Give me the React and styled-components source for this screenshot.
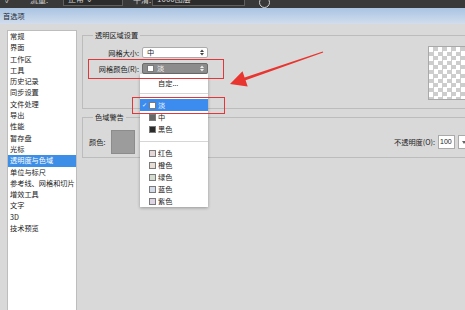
import React from "react";
import styled, { createGlobalStyle } from "styled-components";

const Global = createGlobalStyle`
  html, body { margin: 0; padding: 0; background: #d9d9d9; }
  body { font-family: "Noto Sans CJK SC", "Noto Sans", sans-serif; }
`;

const Window = styled.div`
  position: relative;
  width: 465px;
  height: 310px;
  overflow: hidden;
  background: #d9d9d9;
  display: flex;
  flex-direction: column;
  font-family: "Noto Sans CJK SC", "Noto Sans", sans-serif;
  font-size: 7.2px;
  color: #222;
`;

const TopBar = styled.div`
  height: 8px;
  flex-shrink: 0;
  background: #393939;
  display: flex;
  align-items: flex-end;
  overflow: hidden;
  color: #cfcfcf;
`;

const TBItem = styled.div`
  flex-shrink: 0;
  height: 16px;
  margin-left: ${(p) => p.$ml}px;
  width: ${(p) => p.$w}px;
  margin-bottom: ${(p) => p.$mb || 0}px;
  font-size: 8px;
  line-height: 16px;
  white-space: nowrap;
  overflow: hidden;
`;

const TBInput = styled(TBItem)`
  box-sizing: border-box;
  height: 14px;
  background: #2b2b2b;
  border: 1px solid #5f5f5f;
  padding-left: 4px;
  line-height: 12px;
`;

const TBCircle = styled.div`
  flex-shrink: 0;
  margin-left: ${(p) => p.$ml}px;
  width: 9px;
  height: 9px;
  border: 1.5px solid #d0d0d0;
  border-radius: 50%;
`;

const TitleBar = styled.div`
  height: 16px;
  flex-shrink: 0;
  background: linear-gradient(#a9c4e2, #d2dded);
  padding-left: 3px;
  line-height: 17px;
  font-size: 7.2px;
  color: #1e2a38;
`;

const Content = styled.div`
  flex: 1;
  display: flex;
  align-items: flex-start;
  gap: 5px;
  padding: 6px 0 0 7px;
`;

const Sidebar = styled.div`
  flex-shrink: 0;
  width: 70px;
  height: 290px;
  box-sizing: border-box;
  background: #fff;
  border: 1px solid #bdbdbd;
`;

const NavItem = styled.div`
  height: 11.3px;
  line-height: 11.3px;
  padding-left: 2px;
  white-space: nowrap;
  overflow: hidden;
  background: ${(p) => (p.$active ? "#3d8ee6" : "transparent")};
  color: ${(p) => (p.$active ? "#fff" : "#222")};
`;

const Main = styled.div`
  flex-shrink: 0;
  display: flex;
  flex-direction: column;
  gap: 3px;
`;

const Group = styled.fieldset`
  margin: 0;
  padding: 0;
  min-inline-size: 0;
  width: 405px;
  height: ${(p) => p.$h}px;
  box-sizing: border-box;
  border: 1px solid #bcbcbc;
`;

const GroupTitle = styled.legend`
  margin-left: 10px;
  padding: 0 2px;
  font-size: 7.2px;
  line-height: 10px;
  color: #222;
`;

const GroupRow = styled.div`
  display: flex;
  align-items: ${(p) => p.$align || "flex-start"};
  margin-top: ${(p) => p.$mt || 0}px;
  padding-left: ${(p) => p.$pl || 0}px;
`;

const Form = styled.div`
  display: grid;
  grid-template-columns: 56px 66px;
  column-gap: 3px;
  row-gap: 5px;
  margin-top: 7px;
  align-items: center;
`;

const Label = styled.div`
  text-align: right;
  white-space: nowrap;
`;

const Select = styled.div`
  height: 11px;
  box-sizing: border-box;
  display: flex;
  align-items: center;
  gap: 3px;
  padding: 0 3px 0 4px;
  border-radius: 2px;
  border: 1px solid ${(p) => (p.$pressed ? "#6d6d6d" : "#ababab")};
  background: ${(p) => (p.$pressed ? "#8c8c8c" : "#fff")};
  color: ${(p) => (p.$pressed ? "#fff" : "#222")};
  line-height: 11px;
`;

const SelectText = styled.span`
  flex: 1;
`;

const Swatch = styled.span`
  display: inline-block;
  flex-shrink: 0;
  width: 7px;
  height: 7px;
  box-sizing: border-box;
  border: 1px solid ${(p) => (p.$none ? "transparent" : "#7a7a7a")};
  background: ${(p) => p.$c || "transparent"};
`;

const Preview = styled.div`
  margin: 6px 8px 0 auto;
  width: 50px;
  height: 54px;
  box-sizing: border-box;
  border: 1px solid #a9a9a9;
  background-color: #fff;
  background-image: conic-gradient(#cdcdcd 90deg, #fff 90deg 180deg, #cdcdcd 180deg 270deg, #fff 270deg);
  background-size: 9px 9px;
`;

const ColorLabel = styled.div`
  white-space: nowrap;
`;

const WarnSwatch = styled.div`
  margin-left: 6px;
  width: 24px;
  height: 24px;
  box-sizing: border-box;
  background: #9c9c9c;
  border: 1px solid #8c8c8c;
`;

const Opacity = styled.div`
  margin-left: auto;
  margin-right: 17px;
  display: flex;
  align-items: center;
  gap: 3px;
`;

const NumInput = styled.div`
  width: 17px;
  height: 14px;
  box-sizing: border-box;
  background: #fff;
  border: 1px solid #aaa;
  font-family: "Liberation Sans", sans-serif;
  font-size: 7px;
  line-height: 12px;
  padding-left: 1px;
`;

const ArrowBox = styled.div`
  width: 11px;
  height: 14px;
  box-sizing: border-box;
  background: #fff;
  border: 1px solid #aaa;
  display: flex;
  align-items: center;
  justify-content: center;
`;

const Menu = styled.div`
  position: absolute;
  left: 140px;
  top: 74px;
  width: 68px;
  padding-top: 3px;
  background: #fff;
  box-shadow: 0 1px 3px rgba(0, 0, 0, 0.3);
`;

const MenuItem = styled.div`
  height: 12px;
  display: flex;
  align-items: center;
  padding-left: 2px;
  background: ${(p) => (p.$active ? "#3c8cf0" : "transparent")};
  color: ${(p) => (p.$active ? "#fff" : "#222")};
`;

const Check = styled.span`
  width: 7px;
  flex-shrink: 0;
  font-family: "DejaVu Sans", sans-serif;
  font-size: 6px;
  line-height: 12px;
`;

const ItemText = styled.span`
  margin-left: 2px;
  white-space: nowrap;
`;

const Sep = styled.div`
  height: 1px;
  background: #d6d6d6;
  margin: ${(p) => p.$m};
`;

const Highlight = styled.div`
  position: absolute;
  left: ${(p) => p.$x}px;
  top: ${(p) => p.$y}px;
  width: ${(p) => p.$w}px;
  height: ${(p) => p.$h}px;
  box-sizing: border-box;
  border: 1.5px solid #e0383a;
`;

const ArrowSvg = styled.svg`
  position: absolute;
  left: 225px;
  top: 48px;
`;

const UpDown = ({ color }) => (
  <svg width="4" height="7" viewBox="0 0 4 7">
    <path d="M0 3 L2 0.5 L4 3 Z M0 4 L2 6.5 L4 4 Z" fill={color} />
  </svg>
);

const nav = [
  "常规", "界面", "工作区", "工具", "历史记录", "同步设置", "文件处理", "导出",
  "性能", "暂存盘", "光标", "透明度与色域", "单位与标尺", "参考线、网格和切片",
  "增效工具", "文字", "3D", "技术预览",
];

const colors = [
  ["红色", "#e6d6d6"],
  ["橙色", "#e8ddd5"],
  ["绿色", "#d3dbce"],
  ["蓝色", "#d3dbe8"],
  ["紫色", "#ddd5e3"],
];

export default function App() {
  return (
    <>
      <Global />
      <Window>
        <TopBar>
          <TBItem $ml={5} $w={8}>✓</TBItem>
          <TBItem $ml={17} $w={18}>流量:</TBItem>
          <TBInput $ml={15} $w={60} $mb={2}>正常 ⌄</TBInput>
          <TBItem $ml={10} $w={19}>平滑:</TBItem>
          <TBInput $ml={0} $w={93} $mb={2}>1000图层</TBInput>
          <TBCircle $ml={14} />
        </TopBar>
        <TitleBar>首选项</TitleBar>
        <Content>
          <Sidebar>
            {nav.map((n) => (
              <NavItem key={n} $active={n === "透明度与色域"}>{n}</NavItem>
            ))}
          </Sidebar>
          <Main>
            <Group $h={79}>
              <GroupTitle>透明区域设置</GroupTitle>
              <GroupRow>
                <Form>
                  <Label>网格大小:</Label>
                  <Select>
                    <SelectText>中</SelectText>
                    <UpDown color="#444" />
                  </Select>
                  <Label>网格颜色(R):</Label>
                  <Select $pressed>
                    <Swatch $c="#fff" />
                    <SelectText>淡</SelectText>
                    <UpDown color="#eee" />
                  </Select>
                </Form>
                <Preview />
              </GroupRow>
            </Group>
            <Group $h={46}>
              <GroupTitle>色域警告</GroupTitle>
              <GroupRow $align="center" $mt={8} $pl={6}>
                <ColorLabel>颜色:</ColorLabel>
                <WarnSwatch />
                <Opacity>
                  <ColorLabel>不透明度(O):</ColorLabel>
                  <NumInput>100</NumInput>
                  <ArrowBox>
                    <svg width="4" height="3" viewBox="0 0 4 3">
                      <path d="M0 0 L4 0 L2 3 Z" fill="#666" />
                    </svg>
                  </ArrowBox>
                </Opacity>
              </GroupRow>
            </Group>
          </Main>
        </Content>

        <Menu>
          <MenuItem>
            <Check />
            <Swatch $none />
            <ItemText>自定...</ItemText>
          </MenuItem>
          <Sep $m="4px 0 5px" />
          <MenuItem $active>
            <Check>✓</Check>
            <Swatch $c="#fff" />
            <ItemText>淡</ItemText>
          </MenuItem>
          <MenuItem>
            <Check />
            <Swatch $c="#666" />
            <ItemText>中</ItemText>
          </MenuItem>
          <MenuItem>
            <Check />
            <Swatch $c="#2a2a2a" />
            <ItemText>黑色</ItemText>
          </MenuItem>
          <Sep $m="6px 0 5px" />
          {colors.map(([n, c]) => (
            <MenuItem key={n}>
              <Check />
              <Swatch $c={c} />
              <ItemText>{n}</ItemText>
            </MenuItem>
          ))}
        </Menu>

        <Highlight $x={88} $y={59} $w={136} $h={20} />
        <Highlight $x={132} $y={97} $w={93} $h={17} />

        <ArrowSvg width="105" height="48" viewBox="0 0 105 48">
          <polygon
            points="5,36 17.5,23.2 19.6,29.4 97.8,3.4 98.2,4.6 20.6,32.2 22.7,38.4"
            fill="#e8352f"
          />
        </ArrowSvg>
      </Window>
    </>
  );
}
